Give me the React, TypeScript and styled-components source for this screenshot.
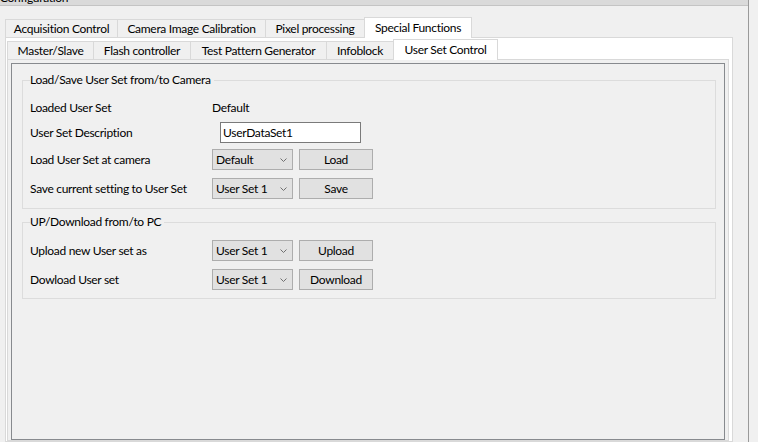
import React from 'react';
import styled, { createGlobalStyle } from 'styled-components';

const GlobalStyle = createGlobalStyle`
  html, body {
    margin: 0;
    padding: 0;
    background: #f0f0f0;
  }
  body {
    font-family: Lato, 'Noto Sans', 'DejaVu Sans', sans-serif;
    font-size: 12px;
    letter-spacing: -0.3px;
    color: #000;
  }
  * {
    box-sizing: border-box;
  }
`;

const Screen = styled.div`
  width: 758px;
  height: 442px;
  overflow: hidden;
  display: flex;
  background: #f0f0f0;
`;

const Dock = styled.div`
  width: 749px;
  height: 100%;
  display: flex;
  flex-direction: column;
  border-right: 1px solid #9a9a9a;
`;

const TitleBar = styled.div`
  height: 16px;
  margin-top: -10px;
  display: flex;
  align-items: center;
  justify-content: space-between;
  background: #dadada;
  border-bottom: 1px solid #c4c4c4;
  line-height: 15px;
  padding-right: 12px;
`;

const DockBody = styled.div`
  flex: 1;
  min-height: 0;
  display: flex;
  flex-direction: column;
  padding: 11px 15px 0 5px;
`;

const TabWidget = styled.div`
  flex: 1;
  min-height: 0;
  display: flex;
  flex-direction: column;
`;

const TabBar = styled.div`
  display: flex;
  align-items: flex-end;
  height: 20px;
  position: relative;
  z-index: 1;
`;

const Tab = styled.div<{ $active?: boolean; $width: number }>`
  width: ${(p) => p.$width}px;
  height: ${(p) => (p.$active ? 21 : 18)}px;
  margin-bottom: ${(p) => (p.$active ? -1 : 0)}px;
  margin-left: -1px;
  &:first-child {
    margin-left: 0;
  }
  padding-top: ${(p) => (p.$active ? 2 : 1)}px;
  line-height: 16px;
  text-align: center;
  white-space: nowrap;
  background: ${(p) => (p.$active ? '#ffffff' : '#f0f0f0')};
  border: 1px solid #d9d9d9;
  border-bottom: 0;
  position: relative;
  z-index: ${(p) => (p.$active ? 2 : 1)};
`;

const Pane = styled.div<{ $bg: string; $pad: string }>`
  flex: 1;
  min-height: 0;
  display: flex;
  flex-direction: column;
  background: ${(p) => p.$bg};
  border: 1px solid #d9d9d9;
  padding: ${(p) => p.$pad};
`;

const PageFrame = styled.div`
  flex: 1;
  min-height: 0;
  border: 1px solid #878a8e;
  background: #f0f0f0;
  padding: 0 8px 0 10px;
`;

const GroupBox = styled.fieldset<{ $gap: number; $padTop: number; $padBottom: number }>`
  margin: ${(p) => p.$gap}px 0 0;
  border: 1px solid #dcdcdc;
  padding: ${(p) => p.$padTop}px 0 ${(p) => p.$padBottom}px 7px;
  min-width: 0;
`;

const GroupTitle = styled.legend`
  padding: 0 3px 0 0;
  line-height: 16px;
  font-size: 12px;
`;

const Row = styled.div<{ $top?: number }>`
  display: grid;
  grid-template-columns: 182px auto auto 1fr;
  align-items: center;
  height: 21px;
  margin-top: ${(p) => p.$top ?? 0}px;
  line-height: 16px;
  white-space: nowrap;
`;

const Label = styled.span``;

const Value = styled.span`
  grid-column: 2 / 4;
`;

const TextBox = styled.div`
  grid-column: 2 / 4;
  margin-left: 8px;
  width: 141px;
  height: 21px;
  border: 1px solid #7a7a7a;
  background: #ffffff;
  padding: 1px 2px 0;
  line-height: 17px;
`;

const Combo = styled.div`
  width: 81px;
  height: 21px;
  display: flex;
  align-items: center;
  justify-content: space-between;
  background: #e1e1e1;
  border: 1px solid #adadad;
  padding: 0 5px 0 3px;
`;

const Button = styled.div`
  margin-left: 6px;
  width: 74px;
  height: 21px;
  display: flex;
  align-items: center;
  justify-content: center;
  background: #e1e1e1;
  border: 1px solid #adadad;
`;

const Chevron = () => (
  <svg width="7" height="4" viewBox="0 0 7 4">
    <polyline points="0.5,0.5 3.5,3.5 6.5,0.5" fill="none" stroke="#707070" strokeWidth="1" />
  </svg>
);

const DockButtons = () => (
  <svg width="6" height="4" viewBox="0 0 6 4">
    <rect x="0" y="0" width="6" height="2" fill="#202020" />
  </svg>
);

const ComboRow = ({ label, value, action, top }: { label: string; value: string; action: string; top: number }) => (
  <Row $top={top}>
    <Label>{label}</Label>
    <Combo>
      <span>{value}</span>
      <Chevron />
    </Combo>
    <Button>{action}</Button>
  </Row>
);

const outerTabs = [
  { title: 'Acquisition Control', width: 113 },
  { title: 'Camera Image Calibration', width: 149 },
  { title: 'Pixel processing', width: 100 },
  { title: 'Special Functions', width: 108, active: true },
];

const innerTabs = [
  { title: 'Master/Slave', width: 87 },
  { title: 'Flash controller', width: 98 },
  { title: 'Test Pattern Generator', width: 137 },
  { title: 'Infoblock', width: 68 },
  { title: 'User Set Control', width: 105, active: true },
];

export default function App() {
  return (
    <>
      <GlobalStyle />
      <Screen>
        <Dock>
          <TitleBar>
            <span>Configuration</span>
            <DockButtons />
          </TitleBar>
          <DockBody>
            <TabWidget>
              <TabBar>
                {outerTabs.map((t) => (
                  <Tab key={t.title} $width={t.width} $active={t.active}>
                    {t.title}
                  </Tab>
                ))}
              </TabBar>
              <Pane $bg="#ffffff" $pad="1px 3px 0 1px">
                <TabWidget>
                  <TabBar>
                    {innerTabs.map((t) => (
                      <Tab key={t.title} $width={t.width} $active={t.active}>
                        {t.title}
                      </Tab>
                    ))}
                  </TabBar>
                  <Pane $bg="#f0f0f0" $pad="3px 3px 0 3px">
                    <PageFrame>
                      <GroupBox $gap={8} $padTop={9} $padBottom={9}>
                        <GroupTitle>Load/Save User Set from/to Camera</GroupTitle>
                        <Row>
                          <Label>Loaded User Set</Label>
                          <Value>Default</Value>
                        </Row>
                        <Row $top={4}>
                          <Label>User Set Description</Label>
                          <TextBox>UserDataSet1</TextBox>
                        </Row>
                        <ComboRow label="Load User Set at camera" value="Default" action="Load" top={6} />
                        <ComboRow label="Save current setting to User Set" value="User Set 1" action="Save" top={8} />
                      </GroupBox>
                      <GroupBox $gap={5} $padTop={10} $padBottom={8}>
                        <GroupTitle>UP/Download from/to PC</GroupTitle>
                        <ComboRow label="Upload new User set as" value="User Set 1" action="Upload" top={0} />
                        <ComboRow label="Dowload User set" value="User Set 1" action="Download" top={8} />
                      </GroupBox>
                    </PageFrame>
                  </Pane>
                </TabWidget>
              </Pane>
            </TabWidget>
          </DockBody>
        </Dock>
      </Screen>
    </>
  );
}
